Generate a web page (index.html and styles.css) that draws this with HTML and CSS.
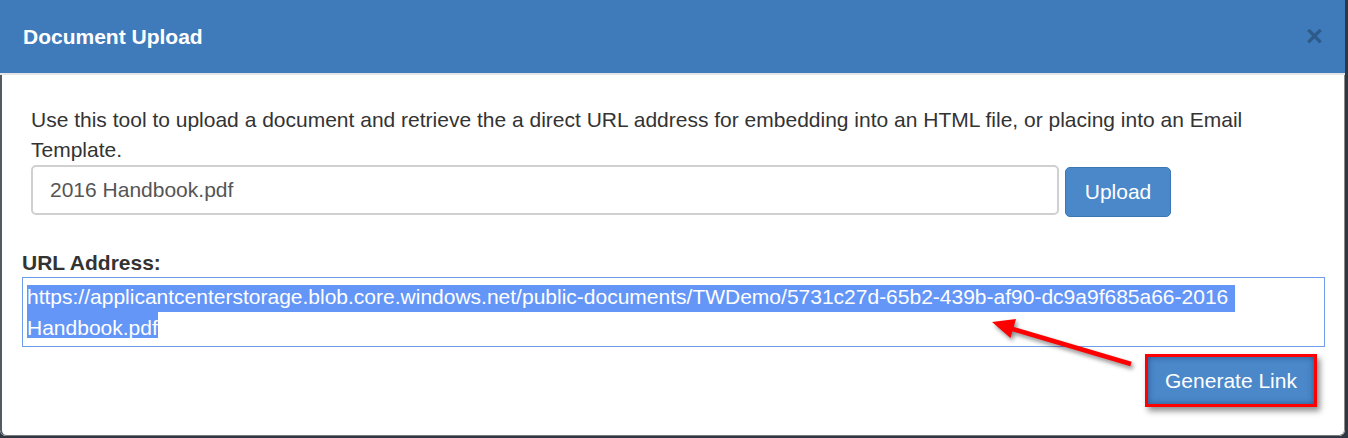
FILE: index.html
```html
<!DOCTYPE html>
<html>
<head>
<meta charset="utf-8">
<link rel="stylesheet" href="styles.css">
</head>
<body>
<div class="modal">
  <div class="modal-header">
    <h4 class="modal-title">Document Upload</h4>
    <span class="close">&times;</span>
  </div>
  <div class="modal-body">
    <div class="upload-group">
      <p class="intro">Use this tool to upload a document and retrieve the a direct URL address for embedding into an HTML file, or placing into an Email Template.</p>
      <div class="upload-row">
        <div class="file-input">2016 Handbook.pdf</div>
        <button class="btn btn-upload">Upload</button>
      </div>
    </div>
    <label class="url-label">URL Address:</label>
    <div class="url-box"><span class="sel sel-1">https://applicantcenterstorage.blob.core.windows.net/public-documents/TWDemo/5731c27d-65b2-439b-af90-dc9a9f685a66-2016 </span><br><span class="sel sel-2">Handbook.pdf</span></div>
    <div class="actions">
      <div class="highlight-box">
        <button class="btn btn-generate">Generate Link</button>
      </div>
    </div>
    <svg class="arrow" width="165" height="70" viewBox="0 0 165 70">
      <line x1="27" y1="19.5" x2="147" y2="55" stroke="#ff0000" stroke-width="4.5" stroke-linecap="butt"/>
      <polygon points="8,13 32,10 26.5,29" fill="#ff0000"/>
    </svg>
  </div>
</div>
</body>
</html>
```

FILE: styles.css
```css
html, body {
  margin: 0;
  padding: 0;
  background: #2f3742;
  height: 438px;
  overflow: hidden;
}

body {
  font-family: "Liberation Sans", Arial, sans-serif;
  color: #333333;
}

.modal {
  width: 1345px;
  height: 436px;
  background: #ffffff;
  border-radius: 0 0 6px 6px;
  overflow: hidden;
  display: flex;
  flex-direction: column;
}

.modal-header {
  height: 73px;
  background: #3f7bba;
  border-bottom: 2px solid #e5e5e5;
  display: flex;
  align-items: center;
  justify-content: space-between;
  padding: 0 22px 0 23px;
  flex: none;
}

.modal-title {
  margin: 0;
  color: #ffffff;
  font-size: 21px;
  font-weight: bold;
  line-height: 28px;
}

.close {
  color: #2d5a8a;
  font-size: 29px;
  font-weight: bold;
  line-height: 28px;
  margin-top: -2px;
}

.modal-body {
  position: relative;
  flex: 1;
  border-left: 2px solid #555a60;
  border-right: 1px solid #8a8a8a;
  border-bottom: 1px solid #777777;
  border-radius: 0 0 6px 6px;
  padding: 30px 19px 0 20px;
}

.upload-group {
  padding-left: 9px;
}

.intro {
  margin: 0;
  font-size: 21px;
  line-height: 30px;
}

.upload-row {
  display: flex;
  align-items: flex-start;
  gap: 6px;
}

.file-input {
  flex: 0 0 1028px;
  box-sizing: border-box;
  height: 50px;
  border: 2px solid #d0d0d0;
  border-radius: 5px;
  padding: 0 17px;
  font-size: 21px;
  line-height: 46px;
  color: #555555;
}

.btn {
  font-family: "Liberation Sans", Arial, sans-serif;
  font-size: 21px;
  color: #ffffff;
  background: #4a88ca;
  cursor: pointer;
}

.btn-upload {
  margin-top: 2px;
  width: 106px;
  height: 50px;
  border: 1px solid #3c77b5;
  border-radius: 5px;
  padding: 0;
}

.url-label {
  display: block;
  margin-top: 32px;
  font-size: 21px;
  font-weight: bold;
  line-height: 28px;
}

.url-box {
  box-sizing: border-box;
  height: 70px;
  border: 1px solid #6d9eeb;
  padding: 4px 4px;
  font-size: 21px;
  line-height: 30px;
  color: #ffffff;
  white-space: nowrap;
}

.sel {
  background: #6496f8;
}

.sel-1 {
  padding-bottom: 3.5px;
  padding-right: 7px;
}

.sel-2 {
  padding-top: 3.5px;
}

.actions {
  display: flex;
  justify-content: flex-end;
  padding-right: 8px;
  margin-top: 7px;
}

.highlight-box {
  border: 3px solid #ff0000;
  box-shadow: 3px 4px 6px rgba(0, 0, 0, 0.45);
  display: flex;
}

.btn-generate {
  width: 166px;
  height: 47px;
  border: none;
  padding: 0;
  box-shadow: inset 0 0 6px rgba(20, 40, 80, 0.55);
}

.arrow {
  position: absolute;
  left: 982px;
  top: 234px;
  filter: drop-shadow(2px 3px 2px rgba(0, 0, 0, 0.45));
}
```
